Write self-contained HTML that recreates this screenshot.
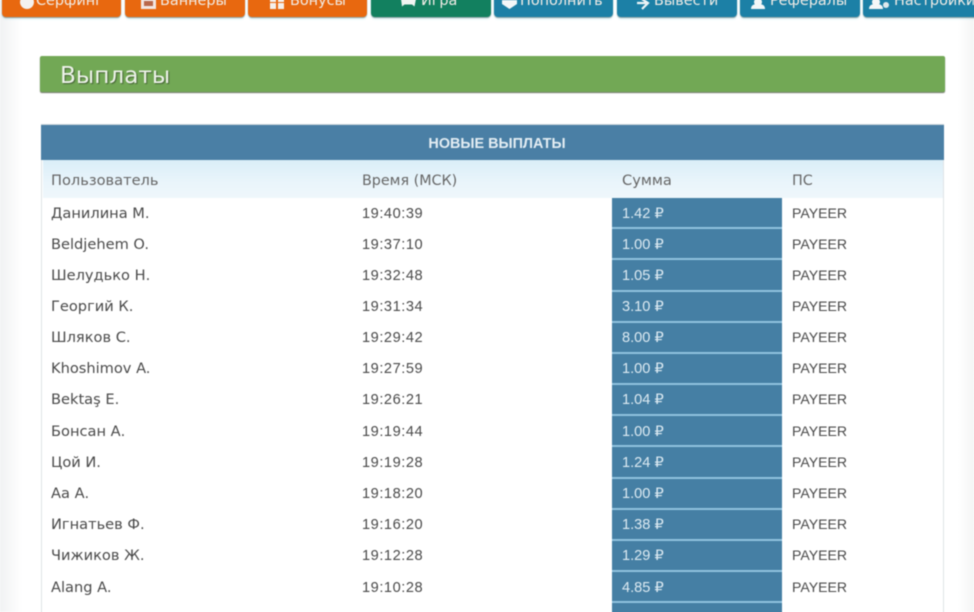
<!DOCTYPE html>
<html lang="ru"><head><meta charset="utf-8"><title>Выплаты</title>
<style>
html,body{margin:0;padding:0;width:974px;height:612px;overflow:hidden;background:#fff}
body{position:relative;font-family:"Liberation Sans","DejaVu Sans",sans-serif;font-size:14.6px;color:#4c4c4c;filter:blur(.45px)}
.a{position:absolute;white-space:nowrap}
.bg{position:absolute;top:0;height:612px}
.b{position:absolute;top:-6px;height:23px;border-radius:0 0 4px 4px;box-shadow:0 1px 1px rgba(40,60,60,.45),0 2px 2px rgba(150,215,225,.35);color:#f1ece6;font-family:"DejaVu Sans",sans-serif;font-size:14.4px;line-height:14px}
.b span{position:absolute;top:0;white-space:nowrap}
.b svg{position:absolute;top:0;left:0;overflow:visible}
.o{background:#e8680f}.g{background:#12805f}.t{background:#1c80a6}
.u,.v,.p,.k{position:absolute;white-space:nowrap;line-height:18px;color:#4a4a4a}
.u{left:51px;font-family:"DejaVu Sans",sans-serif;font-size:14.6px}
.v{left:362px;letter-spacing:.55px}
.p{left:792px;font-size:14.1px;margin-top:-1px}
.k{left:622px;color:#dceaf2}
.h{font-family:"DejaVu Sans",sans-serif;color:#666;letter-spacing:0;margin-top:0}
.m{position:absolute;left:612px;width:170px;height:29px;background:#457fa4;border-bottom:2px solid #8fc2de}
</style></head><body>
<div class="bg" style="left:0;width:22px;background:linear-gradient(90deg,#f1f2f3,#fff)"></div>
<div class="bg" style="left:958px;width:16px;background:linear-gradient(90deg,#fff,#f4f5f5)"></div>

<div class="b o" style="left:2px;width:119px"><svg width="119" height="23"><circle cx="25" cy="8" r="7" fill="#f4f1ee"/></svg><span style="left:34px">Серфинг</span></div>
<div class="b o" style="left:125px;width:120px"><svg width="120" height="23"><rect x="16" y="4" width="15" height="11" fill="#f1e6e2"/><rect x="19" y="7" width="9" height="5" fill="#b9684a"/></svg><span style="left:35px">Баннеры</span></div>
<div class="b o" style="left:248px;width:119px"><svg width="119" height="23"><path d="M22 5h6v3h-6zM30 5h6v3h-6zM22 9h6v6h-6zM30 9h6v6h-6z" fill="#f4f0ec"/></svg><span style="left:42px">Бонусы</span></div>
<div class="b g" style="left:371px;width:120px"><svg width="120" height="23"><path d="M30 5h15l-1.500 7.500-2.500-2h-7.500l-2.500 2z" fill="#f1f5f2"/></svg><span style="left:50px">Игра</span></div>
<div class="b t" style="left:494px;width:119px"><svg width="119" height="23"><path d="M8 6h15v4l-7.500 5-7.500-5z" fill="#f3f7f8"/></svg><span style="left:26px">Пополнить</span></div>
<div class="b t" style="left:617px;width:120px"><svg width="120" height="23"><path d="M20 9h9M25 5l6 4-6 6" fill="none" stroke="#eef5f7" stroke-width="2.200"/></svg><span style="left:37px">Вывести</span></div>
<div class="b t" style="left:740px;width:120px"><svg width="120" height="23"><circle cx="18" cy="8" r="4" fill="#f4f7f8"/><path d="M11 15c0-4 3-5 7-5s7 1 7 5z" fill="#f4f7f8"/></svg><span style="left:30px">Рефералы</span></div>
<div class="b t" style="left:863px;width:116px"><svg width="116" height="23"><circle cx="13" cy="8" r="4" fill="#f4f7f8"/><path d="M6 15c0-4 3-5 7-5s7 1 7 5z" fill="#f4f7f8"/><circle cx="23" cy="11" r="3" fill="#dfe9ec"/></svg><span style="left:31px">Настройки</span></div>

<div class="a" style="left:40px;top:56px;width:905px;height:36px;background:#72a855;border-radius:2px;box-shadow:0 1px 1px rgba(60,70,50,.75)"></div>
<div class="a" style="left:60px;top:61px;font-family:'DejaVu Sans',sans-serif;font-size:23.200px;line-height:30px;color:#eef3ea;text-shadow:1px 1px 1px rgba(50,70,40,.7)">Выплаты</div>

<div class="a" style="left:41px;top:125px;width:903px;height:500px;border:solid #dfe3e6;border-width:0 1.500px;box-sizing:border-box"></div>
<div class="a" style="left:41px;top:125px;width:903px;height:35px;background:#4a7fa5;box-shadow:0 -1px 0 #c8d3da"></div>
<div class="a" style="left:41px;top:135px;width:912px;text-align:center;font-weight:bold;font-size:14.400px;line-height:19px;color:#e3edf3">НОВЫЕ ВЫПЛАТЫ</div>
<div class="a" style="left:42.500px;top:160px;width:900px;height:38px;background:linear-gradient(#daeef8,#eaf5fb 60%,#eff7fb)"></div>

<div class="u h" style="top:172px;font-size:14.600px">Пользователь</div>
<div class="v h" style="top:172px;font-size:14.300px">Время (МСК)</div>
<div class="k h" style="top:172px;font-size:14.600px">Сумма</div>
<div class="p h" style="top:172px;font-size:14.300px">ПС</div>

<div class="m" style="top:198px"></div>
<div class="m" style="top:229px"></div>
<div class="m" style="top:260px;height:30px"></div>
<div class="m" style="top:292px"></div>
<div class="m" style="top:323px"></div>
<div class="m" style="top:354px"></div>
<div class="m" style="top:385px"></div>
<div class="m" style="top:416px"></div>
<div class="m" style="top:447px;height:30px"></div>
<div class="m" style="top:479px"></div>
<div class="m" style="top:510px"></div>
<div class="m" style="top:541px"></div>
<div class="m" style="top:572px"></div>
<div class="m" style="top:603px"></div>

<div class="u" style="top:205px">Данилина М.</div><div class="v" style="top:205px">19:40:39</div><div class="k" style="top:205px">1.42 ₽</div><div class="p" style="top:205px">PAYEER</div>
<div class="u" style="top:236px">Beldjehem O.</div><div class="v" style="top:236px">19:37:10</div><div class="k" style="top:236px">1.00 ₽</div><div class="p" style="top:236px">PAYEER</div>
<div class="u" style="top:267px">Шелудько Н.</div><div class="v" style="top:267px">19:32:48</div><div class="k" style="top:267px">1.05 ₽</div><div class="p" style="top:267px">PAYEER</div>
<div class="u" style="top:298px">Георгий К.</div><div class="v" style="top:298px">19:31:34</div><div class="k" style="top:298px">3.10 ₽</div><div class="p" style="top:298px">PAYEER</div>
<div class="u" style="top:329px">Шляков С.</div><div class="v" style="top:329px">19:29:42</div><div class="k" style="top:329px">8.00 ₽</div><div class="p" style="top:329px">PAYEER</div>
<div class="u" style="top:360px">Khoshimov A.</div><div class="v" style="top:360px">19:27:59</div><div class="k" style="top:360px">1.00 ₽</div><div class="p" style="top:360px">PAYEER</div>
<div class="u" style="top:391px">Bektaş E.</div><div class="v" style="top:391px">19:26:21</div><div class="k" style="top:391px">1.04 ₽</div><div class="p" style="top:391px">PAYEER</div>
<div class="u" style="top:423px">Бонсан А.</div><div class="v" style="top:423px">19:19:44</div><div class="k" style="top:423px">1.00 ₽</div><div class="p" style="top:423px">PAYEER</div>
<div class="u" style="top:454px">Цой И.</div><div class="v" style="top:454px">19:19:28</div><div class="k" style="top:454px">1.24 ₽</div><div class="p" style="top:454px">PAYEER</div>
<div class="u" style="top:485px">Аа А.</div><div class="v" style="top:485px">19:18:20</div><div class="k" style="top:485px">1.00 ₽</div><div class="p" style="top:485px">PAYEER</div>
<div class="u" style="top:516px">Игнатьев Ф.</div><div class="v" style="top:516px">19:16:20</div><div class="k" style="top:516px">1.38 ₽</div><div class="p" style="top:516px">PAYEER</div>
<div class="u" style="top:547px">Чижиков Ж.</div><div class="v" style="top:547px">19:12:28</div><div class="k" style="top:547px">1.29 ₽</div><div class="p" style="top:547px">PAYEER</div>
<div class="u" style="top:579px">Alang A.</div><div class="v" style="top:579px">19:10:28</div><div class="k" style="top:579px">4.85 ₽</div><div class="p" style="top:579px">PAYEER</div>
</body></html>
